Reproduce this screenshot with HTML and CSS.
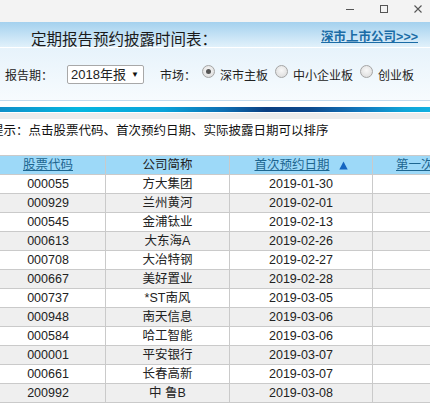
FILE: index.html
```html
<!DOCTYPE html>
<html lang="zh-CN">
<head>
<meta charset="utf-8">
<title>定期报告预约披露时间表</title>
<link rel="stylesheet" href="styles.css">
</head>
<body>
<div class="titlebar">
  <span class="win-btn"><svg width="10" height="10" viewBox="0 0 10 10"><path d="M1 5.5H9" stroke="#555" stroke-width="1"/></svg></span>
  <span class="win-btn"><svg width="10" height="10" viewBox="0 0 10 10"><rect x="1.5" y="1.5" width="7" height="7" fill="none" stroke="#555" stroke-width="1"/></svg></span>
  <span class="win-btn"><svg width="10" height="10" viewBox="0 0 10 10"><path d="M1.5 1.5L8.5 8.5M8.5 1.5L1.5 8.5" stroke="#555" stroke-width="1.1"/></svg></span>
</div>
<div class="header">
  <h1 class="title">定期报告预约披露时间表：</h1>
  <a class="market-link" href="#">深市上市公司&gt;&gt;&gt;</a>
</div>
<div class="controls">
  <span class="label">报告期：</span>
  <span class="select">2018年报<span class="caret">▼</span></span>
  <span class="label market-label">市场：</span>
  <span class="radio checked"></span><span class="opt">深市主板</span>
  <span class="radio"></span><span class="opt">中小企业板</span>
  <span class="radio"></span><span class="opt">创业板</span>
</div>
<div class="bluebar"></div>
<div class="grayband"></div>
<p class="tip">提示：点击股票代码、首次预约日期、实际披露日期可以排序</p>
<table class="grid">
  <thead>
    <tr>
      <th class="c1"><a href="#">股票代码</a></th>
      <th class="c2">公司简称</th>
      <th class="c3"><a href="#">首次预约日期</a><svg class="sort" width="9" height="9" viewBox="0 0 9 9"><path d="M4.5 0.5L8.7 8.5H0.3Z" fill="#1565c0"/></svg></th>
      <th class="c4"><a href="#">第一次变更日期</a></th>
    </tr>
  </thead>
  <tbody>
    <tr><td>000055</td><td>方大集团</td><td>2019-01-30</td><td></td></tr>
    <tr><td>000929</td><td>兰州黄河</td><td>2019-02-01</td><td></td></tr>
    <tr><td>000545</td><td>金浦钛业</td><td>2019-02-13</td><td></td></tr>
    <tr><td>000613</td><td>大东海A</td><td>2019-02-26</td><td></td></tr>
    <tr><td>000708</td><td>大冶特钢</td><td>2019-02-27</td><td></td></tr>
    <tr><td>000667</td><td>美好置业</td><td>2019-02-28</td><td></td></tr>
    <tr><td>000737</td><td>*ST南风</td><td>2019-03-05</td><td></td></tr>
    <tr><td>000948</td><td>南天信息</td><td>2019-03-06</td><td></td></tr>
    <tr><td>000584</td><td>哈工智能</td><td>2019-03-06</td><td></td></tr>
    <tr><td>000001</td><td>平安银行</td><td>2019-03-07</td><td></td></tr>
    <tr><td>000661</td><td>长春高新</td><td>2019-03-07</td><td></td></tr>
    <tr><td>200992</td><td>中 鲁B</td><td>2019-03-08</td><td></td></tr>
  </tbody>
</table>
</body>
</html>
```
FILE: styles.css
```css
html, body {
  margin: 0;
  padding: 0;
  width: 430px;
  height: 403px;
  overflow: hidden;
  background: #fff;
  font-family: "Liberation Sans", "Noto Sans CJK SC", sans-serif;
  font-size: 12.5px;
  color: #222;
}

.titlebar {
  height: 22px;
  background: #f3f3f3;
  display: flex;
  justify-content: flex-end;
  align-items: center;
  padding-right: 7px;
  gap: 24px;
}
.win-btn { display: flex; width: 10px; height: 10px; margin-top: -5px; }

.header {
  height: 25px;
  background: linear-gradient(#a4d1ee, #e1f1fb);
  display: flex;
  align-items: center;
  justify-content: space-between;
  padding: 0 12px 0 31px;
  border-bottom: 1px solid #fff;
}
.title {
  margin: 0;
  font-size: 15.5px;
  font-weight: normal;
  color: #1a1a1a;
  margin-top: 6px;
  white-space: nowrap;
}
.market-link {
  font-size: 12.5px;
  font-weight: bold;
  color: #1b6ca6;
  text-decoration: underline;
  margin-top: 2px;
  white-space: nowrap;
}

.controls {
  height: 52px;
  background: linear-gradient(#e7f3fb, #f7fbfe);
  border-bottom: 1px solid #c3dbed;
  display: flex;
  align-items: center;
  padding-left: 5px;
  margin-bottom: 6px;
  white-space: nowrap;
  font-size: 12px;
}
.controls > span { flex-shrink: 0; }
.label { margin-right: 14px; }
.market-label { margin-left: 16px; margin-right: 6px; }
.select {
  height: 17px;
  border: 1px solid #a8a8a8;
  border-radius: 2px;
  background: #fff;
  font-size: 13px;
  line-height: 17px;
  padding-left: 3px;
  display: flex;
  justify-content: space-between;
  width: 72px;
}
.caret { font-size: 8px; margin-right: 4px; color: #111; }
.radio {
  width: 11px;
  height: 11px;
  border-radius: 50%;
  border: 1px solid #a5a5a5;
  background: radial-gradient(circle at 50% 40%, #f8f8f8, #d8d8d8);
  margin-top: -5px;
  margin-right: 5px;
  position: relative;
}
.radio.checked::after {
  content: "";
  position: absolute;
  left: 3px;
  top: 3px;
  width: 5px;
  height: 5px;
  border-radius: 50%;
  background: #555;
}
.opt { margin-right: 7px; }

.bluebar {
  height: 5px;
  background: linear-gradient(90deg, #0f8fc8 0%, #05b6e0 18%, #0aa3d9 38%, #0d6fb3 52%, #0b3f82 62%, #0d4a8e 72%, #1278bd 84%, #10a5d8 94%, #12b0e0 100%);
  margin-bottom: 1px;
}
.grayband {
  height: 6px;
  background: #ececec;
}

.tip {
  margin: 2px 0 0 -9px;
  height: 20px;
  line-height: 20px;
  white-space: nowrap;
  font-size: 12.5px;
  color: #111;
}

.grid {
  margin-top: 14px;
  margin-left: -10px;
  border-collapse: collapse;
  table-layout: fixed;
  width: 600px;
}
.grid th, .grid td {
  border: 1px solid #cacaca;
  height: 18px;
  padding: 0;
  text-align: center;
  white-space: nowrap;
  overflow: hidden;
  line-height: 18px;
}
.grid th {
  background: #9dd9f8;
  font-weight: normal;
  color: #222;
}
.grid th a { color: #1d6690; text-decoration: underline; }
.grid th.c4 { text-align: left; padding-left: 23px; }
.c1 { width: 114px; }
.c2 { width: 123px; }
.c3 { width: 142px; }
.sort { margin-left: 9px; vertical-align: -1px; }
.grid tbody tr:nth-child(even) td { background: #efefef; }
.grid td { color: #222; }
```
